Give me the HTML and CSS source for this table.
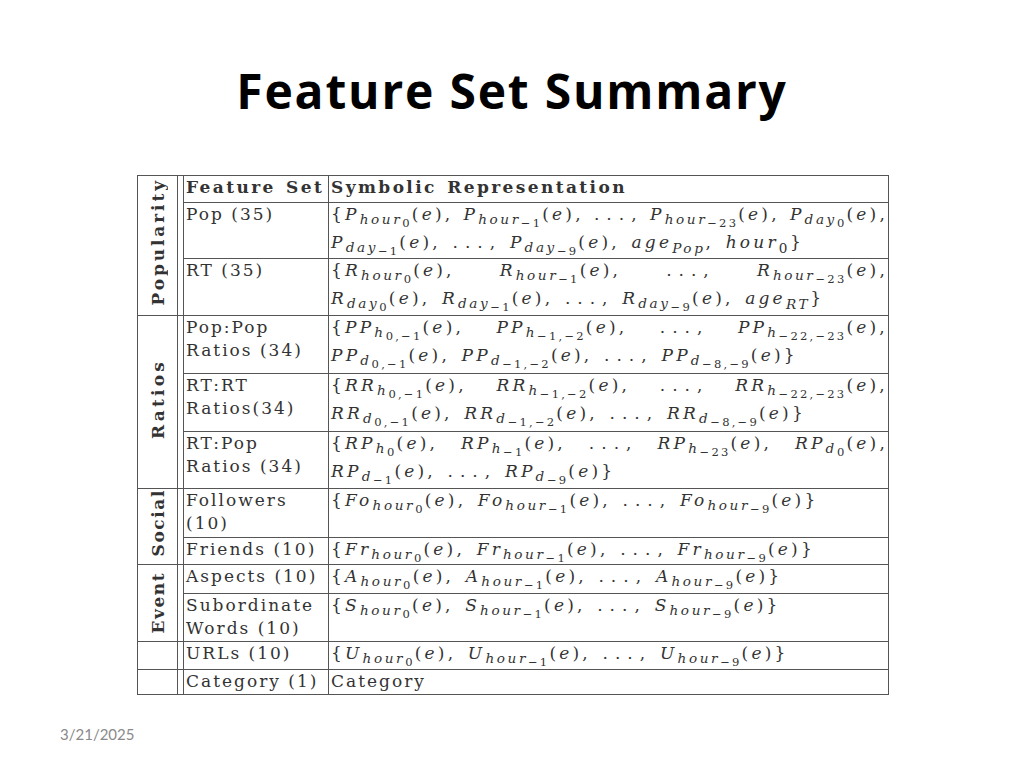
FILE: index.html
```html
<!DOCTYPE html>
<html>
<head>
<meta charset="utf-8">
<link rel="stylesheet" href="styles.css">
</head>
<body>
<div class="slide">
  <h1 class="title">Feature Set Summary</h1>
  <table class="fs">
    <colgroup><col class="c-grp"><col class="c-gap"><col class="c-feat"><col class="c-rep"></colgroup>
    <tr class="h27">
      <td class="grp" rowspan="3"><span class="lb-pop">Popularity</span></td>
      <td class="gap" rowspan="3"></td>
      <td class="feat hd">Feature Set</td>
      <td class="rep hd">Symbolic Representation</td>
    </tr>
    <tr class="h56">
      <td class="feat">Pop (35)</td>
      <td class="rep"><div class="math">
        <div class="line just">
          <span>{<i>P</i><sub><i>hour</i><sub>0</sub></sub>(<i>e</i>),</span>
          <span><i>P</i><sub><i>hour</i><sub>−1</sub></sub>(<i>e</i>),</span>
          <span><span class="dots">...</span>,</span>
          <span><i>P</i><sub><i>hour</i><sub>−23</sub></sub>(<i>e</i>),</span>
          <span><i>P</i><sub><i>day</i><sub>0</sub></sub>(<i>e</i>),</span>
        </div>
        <div class="line"><i>P</i><sub><i>day</i><sub>−1</sub></sub>(<i>e</i>), <span class="dots">...</span>, <i>P</i><sub><i>day</i><sub>−9</sub></sub>(<i>e</i>), <i>age</i><sub><i>Pop</i></sub>, <i>hour</i><sub>0</sub>}</div>
      </div></td>
    </tr>
    <tr class="h57">
      <td class="feat">RT (35)</td>
      <td class="rep"><div class="math">
        <div class="line just">
          <span>{<i>R</i><sub><i>hour</i><sub>0</sub></sub>(<i>e</i>),</span>
          <span><i>R</i><sub><i>hour</i><sub>−1</sub></sub>(<i>e</i>),</span>
          <span><span class="dots">...</span>,</span>
          <span><i>R</i><sub><i>hour</i><sub>−23</sub></sub>(<i>e</i>),</span>
        </div>
        <div class="line"><i>R</i><sub><i>day</i><sub>0</sub></sub>(<i>e</i>), <i>R</i><sub><i>day</i><sub>−1</sub></sub>(<i>e</i>), <span class="dots">...</span>, <i>R</i><sub><i>day</i><sub>−9</sub></sub>(<i>e</i>), <i>age</i><sub><i>RT</i></sub>}</div>
      </div></td>
    </tr>
    <tr class="h58">
      <td class="grp" rowspan="3"><span class="lb-rat">Ratios</span></td>
      <td class="gap" rowspan="3"></td>
      <td class="feat">Pop:Pop<br>Ratios (34)</td>
      <td class="rep"><div class="math">
        <div class="line just">
          <span>{<i>PP</i><sub><i>h</i><sub>0,−1</sub></sub>(<i>e</i>),</span>
          <span><i>PP</i><sub><i>h</i><sub>−1,−2</sub></sub>(<i>e</i>),</span>
          <span><span class="dots">...</span>,</span>
          <span><i>PP</i><sub><i>h</i><sub>−22,−23</sub></sub>(<i>e</i>),</span>
        </div>
        <div class="line"><i>PP</i><sub><i>d</i><sub>0,−1</sub></sub>(<i>e</i>), <i>PP</i><sub><i>d</i><sub>−1,−2</sub></sub>(<i>e</i>), <span class="dots">...</span>, <i>PP</i><sub><i>d</i><sub>−8,−9</sub></sub>(<i>e</i>)}</div>
      </div></td>
    </tr>
    <tr class="h58">
      <td class="feat">RT:RT<br>Ratios(34)</td>
      <td class="rep"><div class="math">
        <div class="line just">
          <span>{<i>RR</i><sub><i>h</i><sub>0,−1</sub></sub>(<i>e</i>),</span>
          <span><i>RR</i><sub><i>h</i><sub>−1,−2</sub></sub>(<i>e</i>),</span>
          <span><span class="dots">...</span>,</span>
          <span><i>RR</i><sub><i>h</i><sub>−22,−23</sub></sub>(<i>e</i>),</span>
        </div>
        <div class="line"><i>RR</i><sub><i>d</i><sub>0,−1</sub></sub>(<i>e</i>), <i>RR</i><sub><i>d</i><sub>−1,−2</sub></sub>(<i>e</i>), <span class="dots">...</span>, <i>RR</i><sub><i>d</i><sub>−8,−9</sub></sub>(<i>e</i>)}</div>
      </div></td>
    </tr>
    <tr class="h57">
      <td class="feat">RT:Pop<br>Ratios (34)</td>
      <td class="rep"><div class="math">
        <div class="line just">
          <span>{<i>RP</i><sub><i>h</i><sub>0</sub></sub>(<i>e</i>),</span>
          <span><i>RP</i><sub><i>h</i><sub>−1</sub></sub>(<i>e</i>),</span>
          <span><span class="dots">...</span>,</span>
          <span><i>RP</i><sub><i>h</i><sub>−23</sub></sub>(<i>e</i>),</span>
          <span><i>RP</i><sub><i>d</i><sub>0</sub></sub>(<i>e</i>),</span>
        </div>
        <div class="line"><i>RP</i><sub><i>d</i><sub>−1</sub></sub>(<i>e</i>), <span class="dots">...</span>, <i>RP</i><sub><i>d</i><sub>−9</sub></sub>(<i>e</i>)}</div>
      </div></td>
    </tr>
    <tr class="h49">
      <td class="grp" rowspan="2"><span class="lb-soc">Social</span></td>
      <td class="gap" rowspan="2"></td>
      <td class="feat">Followers<br>(10)</td>
      <td class="rep"><div class="math">
        <div class="line">{<i>Fo</i><sub><i>hour</i><sub>0</sub></sub>(<i>e</i>), <i>Fo</i><sub><i>hour</i><sub>−1</sub></sub>(<i>e</i>), <span class="dots">...</span>, <i>Fo</i><sub><i>hour</i><sub>−9</sub></sub>(<i>e</i>)}</div>
      </div></td>
    </tr>
    <tr class="h27">
      <td class="feat">Friends (10)</td>
      <td class="rep"><div class="math">
        <div class="line">{<i>Fr</i><sub><i>hour</i><sub>0</sub></sub>(<i>e</i>), <i>Fr</i><sub><i>hour</i><sub>−1</sub></sub>(<i>e</i>), <span class="dots">...</span>, <i>Fr</i><sub><i>hour</i><sub>−9</sub></sub>(<i>e</i>)}</div>
      </div></td>
    </tr>
    <tr class="h29">
      <td class="grp grp-bottom" rowspan="2"><span class="lb-evt">Event</span></td>
      <td class="gap" rowspan="2"></td>
      <td class="feat">Aspects (10)</td>
      <td class="rep"><div class="math">
        <div class="line">{<i>A</i><sub><i>hour</i><sub>0</sub></sub>(<i>e</i>), <i>A</i><sub><i>hour</i><sub>−1</sub></sub>(<i>e</i>), <span class="dots">...</span>, <i>A</i><sub><i>hour</i><sub>−9</sub></sub>(<i>e</i>)}</div>
      </div></td>
    </tr>
    <tr class="h48">
      <td class="feat">Subordinate<br>Words (10)</td>
      <td class="rep"><div class="math">
        <div class="line">{<i>S</i><sub><i>hour</i><sub>0</sub></sub>(<i>e</i>), <i>S</i><sub><i>hour</i><sub>−1</sub></sub>(<i>e</i>), <span class="dots">...</span>, <i>S</i><sub><i>hour</i><sub>−9</sub></sub>(<i>e</i>)}</div>
      </div></td>
    </tr>
    <tr class="h28">
      <td class="grp"></td>
      <td class="gap"></td>
      <td class="feat">URLs (10)</td>
      <td class="rep"><div class="math">
        <div class="line">{<i>U</i><sub><i>hour</i><sub>0</sub></sub>(<i>e</i>), <i>U</i><sub><i>hour</i><sub>−1</sub></sub>(<i>e</i>), <span class="dots">...</span>, <i>U</i><sub><i>hour</i><sub>−9</sub></sub>(<i>e</i>)}</div>
      </div></td>
    </tr>
    <tr class="h25">
      <td class="grp"></td>
      <td class="gap"></td>
      <td class="feat">Category (1)</td>
      <td class="rep plain">Category</td>
    </tr>
  </table>
  <div class="date">3/21/2025</div>
</div>
</body>
</html>
```
FILE: styles.css
```css
html, body {
  margin: 0;
  padding: 0;
  background: #ffffff;
}
.slide {
  width: 1024px;
  height: 768px;
  overflow: hidden;
  background: #ffffff;
}
.title {
  margin: 0;
  padding-top: 62px;
  font-family: "Open Sans", Lato, sans-serif;
  font-weight: 700;
  font-size: 48px;
  line-height: 1.2;
  letter-spacing: 1.8px;
  text-align: center;
  color: #000000;
}
.fs {
  margin: 55px 0 0 137px;
  border-collapse: collapse;
  table-layout: fixed;
  width: 751px;
  font-family: "DejaVu Serif", serif;
  font-size: 17px;
  color: #333333;
  letter-spacing: 2px;
}
.c-grp { width: 40px; }
.c-gap { width: 6px; }
.c-feat { width: 145px; }
.c-rep { width: 560px; }
.fs td {
  border: 1px solid #555555;
  padding: 0 0 0 2px;
  vertical-align: top;
  line-height: 23px;
  white-space: nowrap;
  overflow: hidden;
}
.fs td.gap { padding: 0; }
.fs td.rep { padding: 0 0 0 2px; overflow: visible; }
.h25 { height: 25px; }
.h27 { height: 27px; }
.h28 { height: 28px; }
.h29 { height: 29px; }
.h48 { height: 48px; }
.h49 { height: 49px; }
.h56 { height: 56px; }
.h57 { height: 57px; }
.h58 { height: 58px; }
.hd {
  font-weight: 700;
  letter-spacing: 2.4px;
  word-spacing: 2px;
}
.math { margin-top: -3px; }
.line {
  height: 28px;
  line-height: 28px;
  white-space: nowrap;
  letter-spacing: 3.2px;
  word-spacing: 3px;
}
.line.just {
  display: flex;
  justify-content: space-between;
}
.fs i { font-style: italic; }
.fs sub {
  font-size: 0.8em;
  vertical-align: -0.35em;
  line-height: 0;
  letter-spacing: 2.6px;
}
.fs sub sub {
  font-size: 0.85em;
  vertical-align: -0.3em;
  letter-spacing: 2.2px;
}
.dots { letter-spacing: 7px; }
.fs td.grp {
  padding: 0;
  text-align: center;
  vertical-align: middle;
}
.fs td.grp-bottom { vertical-align: bottom; padding-bottom: 1px; }
.grp span {
  display: inline-block;
  writing-mode: vertical-rl;
  transform: rotate(180deg);
  font-weight: 700;
  line-height: 20px;
}
.lb-pop { letter-spacing: 2.9px; }
.lb-rat { letter-spacing: 3.2px; }
.lb-soc { letter-spacing: 1.6px; }
.lb-evt { letter-spacing: 1.5px; }
.date {
  margin: 30px 0 0 60px;
  font-family: Lato, "Open Sans", sans-serif;
  font-size: 15px;
  color: #8a8a8a;
}
```
